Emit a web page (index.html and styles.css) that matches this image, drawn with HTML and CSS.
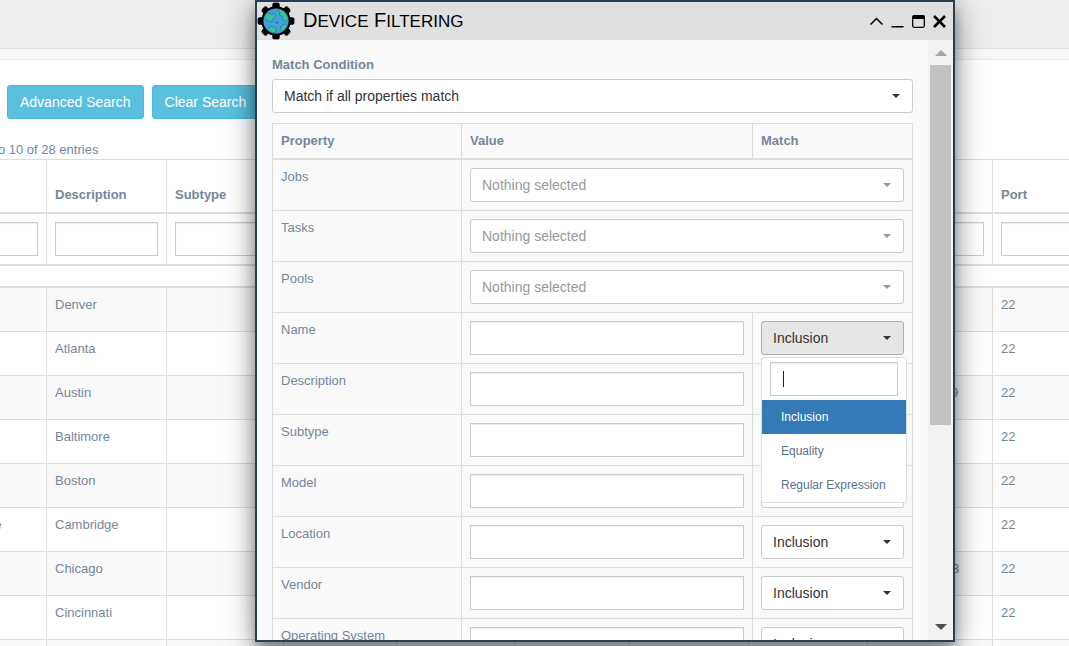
FILE: index.html
```html
<!DOCTYPE html>
<html lang="en">
<head>
<meta charset="utf-8">
<title>Device Filtering</title>
<link rel="stylesheet" href="styles.css">
</head>
<body>
<div class="page">
  <div class="topbar"></div>
  <div class="subbar"></div>
  <main class="devices">
    <div class="toolbar">
      <button class="btn-info" type="button">Advanced Search</button>
      <button class="btn-info" type="button">Clear Search</button>
    </div>
    <p class="entries">Showing 1 to 10 of 28 entries</p>
    <table class="device-table">
      <colgroup>
        <col class="w117"><col class="w120"><col class="w117"><col class="w113"><col class="w118"><col class="w115"><col class="w119"><col class="w119"><col class="w125"><col>
      </colgroup>
      <thead>
        <tr class="titles"><th></th><th>Description</th><th>Subtype</th><th></th><th></th><th></th><th></th><th></th><th></th><th>Port</th></tr>
        <tr class="filters">
          <td><input class="field" aria-label="Filter name"></td>
          <td><input class="field" aria-label="Filter description"></td>
          <td><input class="field" aria-label="Filter subtype"></td>
          <td></td><td></td><td></td><td></td><td></td>
          <td><input class="field" aria-label="Filter address"></td>
          <td><input class="field" aria-label="Filter port"></td>
        </tr>
        <tr class="spacer"><td colspan="10"></td></tr>
      </thead>
      <tbody>
        <tr><td></td><td>Denver</td><td></td><td></td><td></td><td></td><td></td><td></td><td></td><td>22</td></tr>
        <tr><td></td><td>Atlanta</td><td></td><td></td><td></td><td></td><td></td><td></td><td></td><td>22</td></tr>
        <tr><td></td><td>Austin</td><td></td><td></td><td></td><td></td><td></td><td></td><td>10.100.10.119</td><td>22</td></tr>
        <tr><td></td><td>Baltimore</td><td></td><td></td><td></td><td></td><td></td><td></td><td></td><td>22</td></tr>
        <tr><td></td><td>Boston</td><td></td><td></td><td></td><td></td><td></td><td></td><td></td><td>22</td></tr>
        <tr><td>Cambridge</td><td>Cambridge</td><td></td><td></td><td></td><td></td><td></td><td></td><td></td><td>22</td></tr>
        <tr><td></td><td>Chicago</td><td></td><td></td><td></td><td></td><td></td><td></td><td>10.100.10.103</td><td>22</td></tr>
        <tr><td></td><td>Cincinnati</td><td></td><td></td><td></td><td></td><td></td><td></td><td></td><td>22</td></tr>
        <tr><td></td><td></td><td></td><td></td><td></td><td></td><td></td><td></td><td></td><td></td></tr>
      </tbody>
    </table>
  </main>
</div>

<section class="window" aria-labelledby="window-title">
  <header class="window-bar">
    <svg class="logo" viewBox="0 0 38 38" aria-hidden="true">
      <g stroke="#000" stroke-width="5" stroke-linecap="round">
        <path d="M17.800 3V35M20.200 3V35M3 17.800H35M3 20.200H35" />
        <path d="M7 8.500L29.500 31M8.500 7L31 29.500M31 8.500L8.500 31M29.500 7L7 29.500" />
      </g>
      <circle cx="19" cy="19" r="14.700" fill="#000"/>
      <circle cx="19" cy="19" r="12.600" fill="#459fdc"/>
      <path fill="#35c2a0" stroke="#1b5a6c" stroke-width=".5" d="M7 15.500C8 12.500 10 10.800 12 10.500L14.500 12.500 17.500 11.500 19 14 16.500 16 15.500 19 12 19.500 9.500 18ZM20 6.800C23 7 26.500 8.500 28.500 11C30 13 31 15 31.200 17.500L28.500 19.500 26 17.500 25.500 14.500 22.500 13 22.800 10.500ZM10.500 27.500L13.500 24.500 17 25 19.500 27 19 30.500 15.500 31C13.500 30.200 11.500 29 10.500 27.500ZM24.500 23.500L27.500 22 30.500 23C29.500 26 27.500 28.200 25 29.800L23 27.500Z"/>
      <circle cx="20" cy="20.500" r=".9" fill="#1b5a6c"/>
    </svg>
    <h1 class="window-title" id="window-title">D<span>evice</span> F<span>iltering</span></h1>
    <div class="controls">
      <button type="button" aria-label="Smallify"><svg viewBox="0 0 15 15"><path d="M1.500 10.500L7.500 4.500L13.500 10.500" fill="none" stroke="#000" stroke-width="1.500"/></svg></button>
      <button type="button" aria-label="Minimize"><svg viewBox="0 0 15 15"><path d="M1.500 12h12v1.500h-12z"/></svg></button>
      <button type="button" aria-label="Maximize"><svg viewBox="0 0 15 15"><rect x="1.700" y="1.700" width="11.600" height="11.600" rx="1.500" fill="none" stroke="#000" stroke-width="1.300"/><path d="M1.500 1.500h12v3.500h-12z"/></svg></button>
      <button type="button" aria-label="Close"><svg viewBox="0 0 15 15"><path d="M2 2L13 13M13 2L2 13" stroke="#000" stroke-width="2.600"/></svg></button>
    </div>
  </header>
  <div class="window-body">
    <form class="content">
      <label class="form-label" for="condition">Match Condition</label>
      <div class="picker"><select id="condition"><option>Match if all properties match</option></select></div>
      <table class="property-table">
        <colgroup><col class="w189"><col><col class="w160"></colgroup>
        <thead><tr><th>Property</th><th>Value</th><th>Match</th></tr></thead>
        <tbody>
          <tr><td><label for="jobs">Jobs</label></td><td colspan="2"><div class="picker empty"><select id="jobs"><option>Nothing selected</option></select></div></td></tr>
          <tr><td><label for="tasks">Tasks</label></td><td colspan="2"><div class="picker empty"><select id="tasks"><option>Nothing selected</option></select></div></td></tr>
          <tr><td><label for="pools">Pools</label></td><td colspan="2"><div class="picker empty"><select id="pools"><option>Nothing selected</option></select></div></td></tr>
          <tr>
            <td><label for="name">Name</label></td><td><input class="field" id="name"></td>
            <td>
              <div class="picker open">
                <select aria-label="Name match"><option>Inclusion</option></select>
                <div class="menu">
                  <div class="menu-search"><input class="field" aria-label="Search options"><span class="cursor"></span></div>
                  <button class="option selected" type="button">Inclusion</button>
                  <button class="option" type="button">Equality</button>
                  <button class="option" type="button">Regular Expression</button>
                </div>
              </div>
            </td>
          </tr>
          <tr><td><label for="description">Description</label></td><td><input class="field" id="description"></td><td><div class="picker"><select aria-label="Description match"><option>Inclusion</option></select></div></td></tr>
          <tr><td><label for="subtype">Subtype</label></td><td><input class="field" id="subtype"></td><td><div class="picker"><select aria-label="Subtype match"><option>Inclusion</option></select></div></td></tr>
          <tr><td><label for="model">Model</label></td><td><input class="field" id="model"></td><td><div class="picker"><select aria-label="Model match"><option>Inclusion</option></select></div></td></tr>
          <tr><td><label for="location">Location</label></td><td><input class="field" id="location"></td><td><div class="picker"><select aria-label="Location match"><option>Inclusion</option></select></div></td></tr>
          <tr><td><label for="vendor">Vendor</label></td><td><input class="field" id="vendor"></td><td><div class="picker"><select aria-label="Vendor match"><option>Inclusion</option></select></div></td></tr>
          <tr><td><label for="os">Operating System</label></td><td><input class="field" id="os"></td><td><div class="picker"><select aria-label="Operating system match"><option>Inclusion</option></select></div></td></tr>
        </tbody>
      </table>
    </form>
    <div class="scrollbar" aria-hidden="true">
      <span class="arrow up"></span>
      <span class="thumb"></span>
      <span class="arrow down"></span>
    </div>
  </div>
</section>
</body>
</html>
```

FILE: styles.css
```css
* { box-sizing: border-box; }

body {
  margin: 0;
  height: 100vh;
  overflow: hidden;
  background: #fff;
  color: #73879c;
  font-family: "Liberation Sans", Arial, sans-serif;
  font-size: 13px;
  line-height: 18px;
}

button, input, select { font-family: inherit; margin: 0; }
table { border-collapse: separate; border-spacing: 0; table-layout: fixed; }
th { text-align: left; }

.w113 { width: 113px; }
.w115 { width: 115px; }
.w117 { width: 117px; }
.w118 { width: 118px; }
.w119 { width: 119px; }
.w120 { width: 120px; }
.w125 { width: 125px; }
.w160 { width: 160px; }
.w189 { width: 189px; }

/* Device list behind the window */
.page { height: 100vh; overflow: hidden; }
.topbar { height: 49px; background: #ededed; border-bottom: 1px solid #d9dee4; }
.subbar { height: 11px; background: #f7f7f7; border-bottom: 1px solid #e6e9ed; }
.devices { margin-left: -70px; padding-top: 25px; }
.toolbar { display: flex; gap: 8px; padding-left: 77px; }
.btn-info {
  height: 34px;
  padding: 0 12px;
  border: 1px solid #46b8da;
  border-radius: 3px;
  background: #5bc0de;
  color: #fff;
  font-size: 14px;
  white-space: nowrap;
}
.entries { margin: 22px 0 0; line-height: 18px; }

.device-table { width: 1250px; border-top: 1px solid #ddd; }
.device-table th, .device-table td {
  padding: 8px;
  border-right: 1px solid #ddd;
  border-bottom: 1px solid #ddd;
  vertical-align: top;
}
.device-table .titles th { height: 54px; border-bottom-width: 2px; vertical-align: bottom; }
.device-table .filters td { height: 52px; border-bottom-width: 2px; }
.device-table .spacer td { height: 22px; padding: 0; border-bottom-width: 2px; }
.device-table tbody td { height: 44px; }
.device-table tbody tr:nth-child(odd) { background: #f9f9f9; }

.field {
  display: block;
  width: 100%;
  height: 34px;
  padding: 6px 12px;
  border: 1px solid #ccc;
  border-radius: 0;
  background: #fff;
  box-shadow: inset 0 1px 1px rgba(0, 0, 0, .075);
  font-size: 14px;
  outline: 0;
}

/* Floating window */
.window {
  position: absolute;
  top: 0;
  left: 255px;
  display: flex;
  flex-direction: column;
  width: 700px;
  height: calc(100vh - 4px);
  border: 2px solid #2a3f54;
  background: #fafafa;
  box-shadow: 0 14px 28px rgba(0, 0, 0, .25), 0 10px 10px rgba(0, 0, 0, .22), 0 0 26px rgba(0, 0, 0, .25);
}
.window-bar {
  display: flex;
  align-items: center;
  flex: none;
  height: 38px;
  padding-right: 3px;
  background: #e0e0e0;
}
.logo { width: 38px; height: 38px; }
.window-title {
  flex: 1;
  margin: 0;
  padding-left: 8px;
  color: #000;
  font-size: 20px;
  font-weight: 400;
  line-height: 24px;
}
.window-title span { font-size: 17px; text-transform: uppercase; }
.controls { display: flex; }
.controls button { display: flex; justify-content: center; width: 21px; padding: 0; border: 0; background: none; }
.controls svg { width: 15px; height: 15px; }

.window-body { display: flex; flex: 1; min-height: 0; }
.content { flex: 1; min-width: 0; padding: 16px 15px 0; overflow: hidden; }
.form-label { display: block; margin-bottom: 5px; font-weight: 700; }

.picker { position: relative; }
.picker select {
  display: block;
  width: 100%;
  height: 34px;
  padding: 0 28px 0 11px;
  border: 1px solid #ccc;
  border-radius: 3px;
  background: #fff;
  color: #333;
  font-size: 14px;
  appearance: none;
}
.picker::after {
  content: "";
  position: absolute;
  top: 15px;
  right: 13px;
  border-top: 4px solid #333;
  border-left: 4px solid transparent;
  border-right: 4px solid transparent;
}
.picker.empty select { color: #999; }
.picker.empty::after { border-top-color: #999; }
.picker.open select { background: #e6e6e6; border-color: #adadad; }

.property-table {
  width: 100%;
  margin-top: 10px;
  border-top: 1px solid #ddd;
  border-left: 1px solid #ddd;
}
.property-table th, .property-table td {
  padding: 8px;
  border-right: 1px solid #ddd;
  border-bottom: 1px solid #ddd;
  vertical-align: top;
}
.property-table th { height: 36px; border-bottom-width: 2px; }
.property-table td { height: 51px; }
.property-table tbody tr:nth-child(odd) { background: #f9f9f9; }

.menu {
  position: absolute;
  z-index: 2;
  top: 36px;
  left: 0;
  width: 146px;
  border: 1px solid #d9dee4;
  border-radius: 3px;
  background: #fff;
}
.menu-search { position: relative; padding: 4px 8px; }
.cursor { position: absolute; top: 13px; left: 21px; width: 1px; height: 16px; background: #222; }
.option {
  display: block;
  width: 100%;
  height: 34px;
  padding: 0 19px;
  border: 0;
  background: none;
  color: #5a738e;
  font-size: 12px;
  text-align: left;
  white-space: nowrap;
}
.option.selected { background: #337ab7; color: #fff; }

.scrollbar {
  display: flex;
  flex-direction: column;
  align-items: center;
  width: 25px;
  padding: 10px 0;
  background: #f1f1f1;
}
.arrow { border-left: 6px solid transparent; border-right: 6px solid transparent; }
.arrow.up { border-bottom: 6px solid #a3a3a3; }
.arrow.down { margin-top: auto; border-top: 6px solid #505050; }
.thumb { width: 21px; height: 62%; margin-top: 9px; background: #c1c1c1; }
```
